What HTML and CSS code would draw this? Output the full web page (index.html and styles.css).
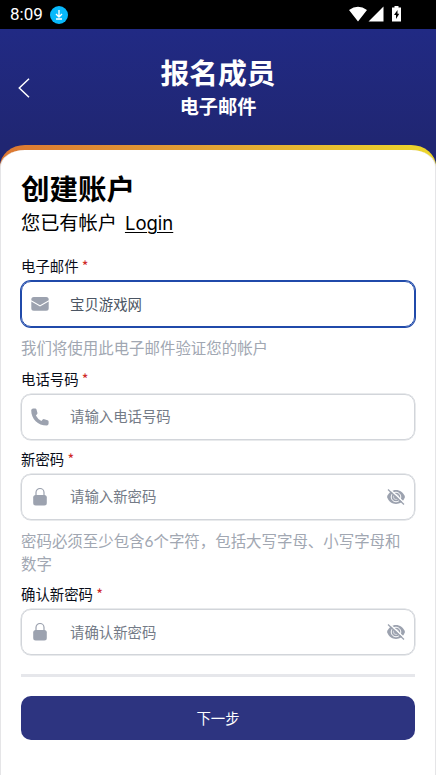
FILE: index.html
```html
<!DOCTYPE html>
<html lang="zh-CN">
<head>
<meta charset="utf-8">
<meta name="viewport" content="width=device-width, initial-scale=1">
<title>报名成员</title>
<link rel="stylesheet" href="styles.css">
</head>
<body>
<div class="status">
  <span class="clock">8:09</span>
  <svg class="download" viewBox="0 0 18 18"><circle cx="9" cy="9" r="9" fill="#08b9fc"/><path d="M9 4v7M6 8l3 3 3-3M6 13h6" fill="none" stroke="#fff" stroke-width="1.4"/></svg>
  <svg class="signals" viewBox="0 0 54 17" fill="#fff"><path d="M0 4Q9-2.3 18 4L9 15.6zM19.5 15.5H34.500V.5zM44 1.500h1.500V0h4v1.500H52V15.500H43V1.500z"/><path d="M48.500 4 45 9h2v4l3.300-5.200h-1.800z" fill="#000"/></svg>
</div>
<header class="header">
  <svg class="back" viewBox="0 0 12 20"><path d="M11 .8 1.300 10 11 19.200" fill="none" stroke="#fff" stroke-width="1.500"/></svg>
  <h1 class="title">报名成员</h1>
  <p class="subtitle">电子邮件</p>
</header>
<div class="panel">
  <main class="sheet">
    <h2 class="heading">创建账户</h2>
    <p class="account">您已有帐户<a class="login">Login</a></p>
    <label class="label">电子邮件 <span class="required">*</span></label>
    <div class="field active">
      <svg class="icon" viewBox="0 0 18 18"><path d="M.3 5.300V4.500Q.3 2 2.800 2h12.400q2.500 0 2.500 2.500v.8L9 10.200zM.3 6.600 9 11.500l8.700-4.900v6.600q0 2.500-2.500 2.500H2.800q-2.500 0-2.500-2.500z"/></svg>
      <span class="value">宝贝游戏网</span>
    </div>
    <p class="help">我们将使用此电子邮件验证您的帐户</p>
    <label class="label phone-label">电话号码 <span class="required">*</span></label>
    <div class="field">
      <svg class="icon" viewBox="0 0 18 18"><path d="M.2 2.200Q.4.500 2.200.5h2q1 0 1.300.9l.9 3.300q.3.900-.4 1.600L4.900 7.500q1.800 3.700 5.500 5.400l1.300-1.300q.6-.7 1.600-.4l3.300 1q1 .3 1 1.300v2q-.1 2-1.900 2C7 17.500.2 11 .2 2.200z"/></svg>
      <span class="placeholder">请输入电话号码</span>
    </div>
    <label class="label second-label">新密码 <span class="required">*</span></label>
    <div class="field">
      <svg class="icon" viewBox="0 0 18 18"><path d="M5 8V4.500a4 4 0 0 1 8 0V8" fill="none" stroke="#9ca2af" stroke-width="1.200"/><rect x="2.200" y="7" width="13.600" height="10.500" rx="2.500"/></svg>
      <span class="placeholder">请输入新密码</span>
      <svg class="eye" viewBox="0 0 18 18"><path d="M0 9C3-.2 15-.2 18 9 15 18.200 3 18.200 0 9z"/><circle cx="9" cy="9" r="4.800" fill="none" stroke="#fff" stroke-width="1"/><circle cx="9" cy="9" r="2.500" fill="none" stroke="#fff" stroke-width=".6"/><path d="M2 .5 18 15.500" stroke="#fff" stroke-width="1.500"/><path d="M1 1.500 17 16.500" stroke="#9ca2af" stroke-width="1.300"/></svg>
    </div>
    <p class="help">密码必须至少包含6个字符，包括大写字母、小写字母和数字</p>
    <label class="label confirm-label">确认新密码 <span class="required">*</span></label>
    <div class="field">
      <svg class="icon" viewBox="0 0 18 18"><path d="M5 8V4.500a4 4 0 0 1 8 0V8" fill="none" stroke="#9ca2af" stroke-width="1.200"/><rect x="2.200" y="7" width="13.600" height="10.500" rx="2.500"/></svg>
      <span class="placeholder">请确认新密码</span>
      <svg class="eye" viewBox="0 0 18 18"><path d="M0 9C3-.2 15-.2 18 9 15 18.200 3 18.200 0 9z"/><circle cx="9" cy="9" r="4.800" fill="none" stroke="#fff" stroke-width="1"/><circle cx="9" cy="9" r="2.500" fill="none" stroke="#fff" stroke-width=".6"/><path d="M2 .5 18 15.500" stroke="#fff" stroke-width="1.500"/><path d="M1 1.500 17 16.500" stroke="#9ca2af" stroke-width="1.300"/></svg>
    </div>
    <hr class="divider">
    <button class="submit">下一步</button>
  </main>
</div>
</body>
</html>
```
FILE: styles.css
```css
* { box-sizing: border-box; }
body {
  margin: 0;
  height: 775px;
  overflow: hidden;
  background: #202672;
  font-family: "Noto Sans CJK SC", sans-serif;
  font-weight: 400;
  color: #090d19;
}
h1, h2, p { margin: 0; }
svg { display: block; flex: none; }
.status {
  height: 29px;
  padding: 0 33px 0 10px;
  display: flex;
  align-items: center;
  background: #000;
  color: #fff;
}
.clock { width: 40px; font: 400 17px/31px Roboto, sans-serif; }
.download { width: 18px; height: 18px; }
.signals { width: 54px; height: 17px; margin-left: auto; }
.header {
  position: relative;
  height: 116px;
  padding-top: 24px;
  background: linear-gradient(#212a84, #202672);
  color: #fff;
  text-align: center;
}
.back { position: absolute; left: 18px; top: 49px; width: 12px; height: 20px; }
.title { font-size: 28.800px; line-height: 38px; font-weight: 700; }
.subtitle { font-size: 19.200px; line-height: 30px; font-weight: 700; }
.panel {
  padding-top: 5px;
  border-radius: 25px 25px 0 0 / 21px 21px 0 0;
  background: linear-gradient(90deg, #dc7732, #e3a535 50%, #edd72c);
}
.sheet {
  height: 625px;
  padding: 19px 20px 0;
  border: 1px solid #e5e5e7;
  border-width: 0 1px;
  border-radius: 25px 25px 0 0 / 17px 17px 0 0;
  background: #fff;
}
.heading { font-size: 28.500px; line-height: 38px; font-weight: 700; color: #000; }
.account { font-size: 19.200px; line-height: 31px; height: 31px; color: #000; }
.login {
  margin-left: 8px;
  font-family: Inter, sans-serif;
  font-size: 18.500px;
  font-weight: 400;
  text-decoration: underline;
  text-underline-offset: 2px;
  text-decoration-thickness: 1px;
}
.label { display: block; margin-top: 17px; height: 26px; font-size: 14.400px; line-height: 22px; }
.phone-label { margin-top: 8px; }
.second-label { margin-top: 8px; }
.confirm-label { margin-top: 8px; }
.required { color: #cf2928; }
.field {
  height: 46px;
  display: flex;
  align-items: center;
  padding: 0 9px;
  border: 1px solid #d2d5da;
  box-shadow: 0 0 0 .5px #d2d5da;
  border-radius: 10px;
  font-size: 14.400px;
}
.active { border-color: #204aaa; box-shadow: 0 0 0 1px #204aaa; }
.icon { width: 18px; height: 18px; margin-right: 21px; fill: #9ca2af; }
.eye { width: 18px; height: 18px; margin-left: auto; fill: #9ca2af; }
.placeholder, .value { margin-top: -2px; }
.placeholder { color: #747b87; }
.value { color: #4b5563; }
.help {
  margin-top: 10px;
  padding-right: 10px;
  font-family: Lato, "Noto Sans CJK SC", sans-serif;
  font-size: 15.450px;
  line-height: 23px;
  color: #a1a7b2;
}
.help + .label { margin-top: 7.500px; }
.divider { height: 3px; margin: 19px 0; border: 0; background: #e6e7eb; }
.submit {
  display: block;
  width: 100%;
  height: 44px;
  padding: 0 0 2px;
  border: 0;
  border-radius: 10px;
  background: #2d3480;
  color: #fff;
  font: 400 14.400px "Noto Sans CJK SC", sans-serif;
}
```
